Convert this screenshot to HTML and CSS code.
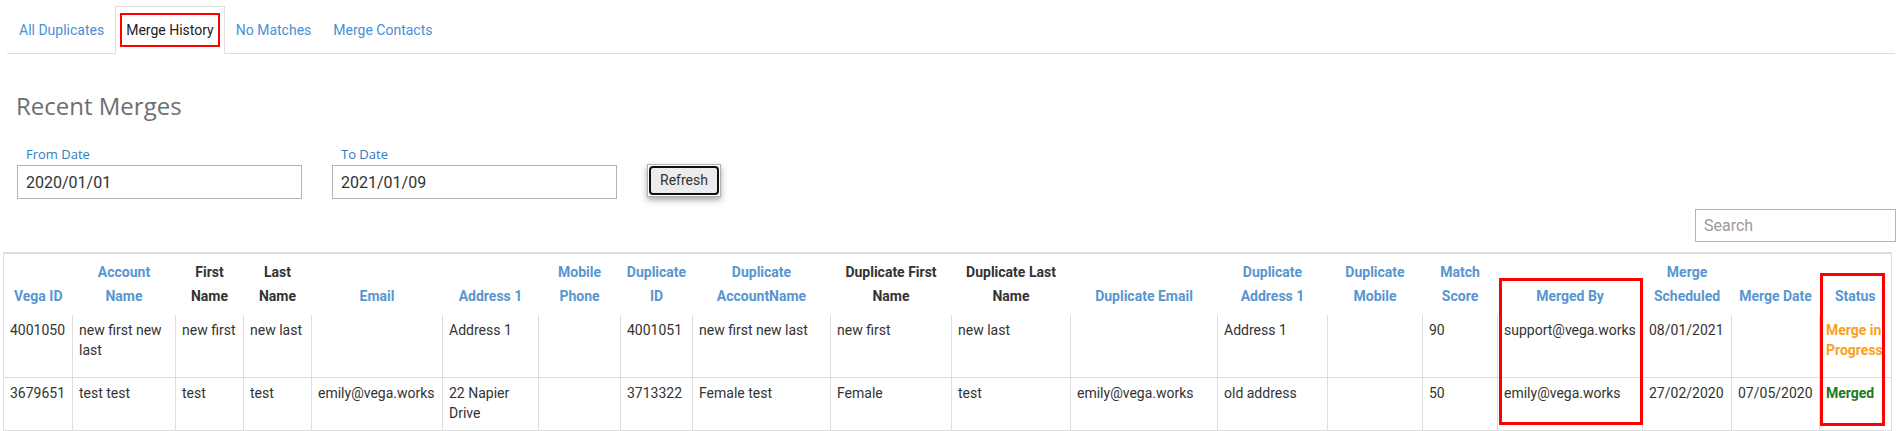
FILE: index.html
```html
<!DOCTYPE html>
<html lang="en">
<head>
  <meta charset="UTF-8">
  <meta name="viewport" content="width=device-width, initial-scale=1.0">
  <title>Merge History</title>
  <link rel="stylesheet" href="styles.css">
</head>
<body>

  <ul class="tabs">
    <li><a href="#"><span>All Duplicates</span></a></li>
    <li class="active"><a href="#"><span>Merge History</span></a></li>
    <li><a href="#"><span>No Matches</span></a></li>
    <li><a href="#"><span>Merge Contacts</span></a></li>
  </ul>

  <div class="content">
    <h2 class="title">Recent Merges</h2>

    <div class="filters">
      <div class="field">
        <label for="from-date">From Date</label>
        <input type="text" id="from-date" class="input" value="2020/01/01">
      </div>
      <div class="field">
        <label for="to-date">To Date</label>
        <input type="text" id="to-date" class="input" value="2021/01/09">
      </div>
      <button class="refresh"><span>Refresh</span></button>
    </div>
  </div>

  <div class="search-row">
    <input type="text" class="search" placeholder="Search">
  </div>

  <div class="grid-wrap">
    <table class="grid">
      <colgroup>
        <col class="w69"><col class="w103"><col class="w68"><col class="w68"><col class="w131">
        <col class="w96"><col class="w82"><col class="w72"><col class="w138"><col class="w121">
        <col class="w119"><col class="w147"><col class="w110"><col class="w95"><col class="w75">
        <col class="w145"><col class="w89"><col class="w88"><col class="w72">
      </colgroup>
      <thead>
        <tr>
          <th>Vega ID</th>
          <th>Account Name</th>
          <th class="plain">First Name</th>
          <th class="plain">Last Name</th>
          <th>Email</th>
          <th>Address 1</th>
          <th>Mobile Phone</th>
          <th>Duplicate ID</th>
          <th>Duplicate AccountName</th>
          <th class="plain">Duplicate First Name</th>
          <th class="plain">Duplicate Last Name</th>
          <th>Duplicate Email</th>
          <th>Duplicate Address 1</th>
          <th>Duplicate Mobile</th>
          <th>Match Score</th>
          <th>Merged By</th>
          <th>Merge Scheduled</th>
          <th>Merge Date</th>
          <th>Status</th>
        </tr>
      </thead>
      <tbody>
        <tr class="first">
          <td>4001050</td>
          <td>new first new last</td>
          <td>new first</td>
          <td>new last</td>
          <td></td>
          <td>Address 1</td>
          <td></td>
          <td>4001051</td>
          <td>new first new last</td>
          <td>new first</td>
          <td>new last</td>
          <td></td>
          <td>Address 1</td>
          <td></td>
          <td>90</td>
          <td>support@vega.works</td>
          <td>08/01/2021</td>
          <td></td>
          <td class="status pending">Merge in Progress</td>
        </tr>
        <tr>
          <td>3679651</td>
          <td>test test</td>
          <td>test</td>
          <td>test</td>
          <td>emily@vega.works</td>
          <td>22 Napier Drive</td>
          <td></td>
          <td>3713322</td>
          <td>Female test</td>
          <td>Female</td>
          <td>test</td>
          <td>emily@vega.works</td>
          <td>old address</td>
          <td></td>
          <td>50</td>
          <td>emily@vega.works</td>
          <td>27/02/2020</td>
          <td>07/05/2020</td>
          <td class="status merged">Merged</td>
        </tr>
      </tbody>
    </table>

    <div class="mark mark-by"></div>
    <div class="mark mark-status"></div>
  </div>

</body>
</html>
```

FILE: styles.css
```css
body {
  margin: 0;
  font-family: Roboto, "Liberation Sans", sans-serif;
  color: #333;
  background-color: #fff;
}

/* tabs */
.tabs {
  display: flex;
  list-style: none;
  margin: 6px 7px 0 7px;
  padding: 0 0 0 1px;
  border-bottom: 1px solid #ddd;
}

.tabs a {
  display: block;
  margin-bottom: -1px;
  padding: 6px 4px;
  border: 1px solid transparent;
  font-size: 14px;
  line-height: 20px;
  color: #4a8fd6;
  text-decoration: none;
}

.tabs a span {
  display: block;
  padding: 5px 4px;
  border: 2px solid transparent;
}

.tabs .active a {
  border-color: #ddd;
  border-bottom-color: #fff;
  color: #222;
}

.tabs .active a span {
  border-color: #f00;
}

/* filters */
.content {
  padding-left: 17px;
}

.title {
  margin: 36px 0 0 -1px;
  font-family: "Open Sans", sans-serif;
  font-weight: 400;
  font-size: 24px;
  line-height: 32px;
  color: #6f6f6f;
}

.filters {
  display: flex;
  align-items: flex-start;
  gap: 30px;
  margin-top: 23px;
}

.field label {
  display: block;
  margin-bottom: 2px;
  padding-left: 9px;
  font-family: "Open Sans", sans-serif;
  font-size: 13px;
  line-height: 18px;
  color: #2f7bc4;
}

.input {
  box-sizing: border-box;
  width: 285px;
  height: 34px;
  padding: 0 8px;
  border: 1px solid #b4b4b4;
  font-family: Roboto, sans-serif;
  font-size: 16px;
  color: #333;
  outline: none;
}

.refresh {
  margin-top: 19px;
  padding: 1px;
  border: 1px solid #b1b1b1;
  background-color: #fff;
  box-shadow: 0 3px 6px rgba(0, 0, 0, 0.35);
  font-family: Roboto, sans-serif;
  font-size: 14px;
  color: #333;
  cursor: pointer;
}

.refresh span {
  display: block;
  padding: 2px 9px;
  border: 2px solid #111;
  border-radius: 4px;
  background-color: #ececec;
  line-height: 21px;
}

.search-row {
  display: flex;
  justify-content: flex-end;
  margin-top: 10px;
  padding-right: 6px;
}

.search {
  box-sizing: border-box;
  width: 201px;
  height: 33px;
  padding: 0 8px;
  border: 1px solid #b4b4b4;
  font-family: Roboto, sans-serif;
  font-size: 16px;
  color: #333;
  outline: none;
}

.search::placeholder {
  color: #9a9a9a;
}

/* table */
.grid-wrap {
  position: relative;
  width: 1888px;
  margin: 10px 0 0 3px;
}

.grid {
  width: 1888px;
  table-layout: fixed;
  border-collapse: collapse;
  border: 1px solid #ddd;
  border-top: 2px solid #ddd;
  border-bottom: 2px solid #ddd;
}

.w68 { width: 68px; }
.w69 { width: 69px; }
.w72 { width: 72px; }
.w75 { width: 75px; }
.w82 { width: 82px; }
.w88 { width: 88px; }
.w89 { width: 89px; }
.w95 { width: 95px; }
.w96 { width: 96px; }
.w103 { width: 103px; }
.w110 { width: 110px; }
.w119 { width: 119px; }
.w121 { width: 121px; }
.w131 { width: 131px; }
.w138 { width: 138px; }
.w145 { width: 145px; }
.w147 { width: 147px; }

.grid th {
  padding: 6px 6px 7px;
  font-size: 14px;
  font-weight: 700;
  line-height: 24px;
  text-align: center;
  vertical-align: bottom;
  color: #5896d0;
}

.grid th.plain {
  color: #333;
}

.grid td {
  padding: 5px 6px 7px;
  border-left: 1px solid #ddd;
  border-top: 1px solid #ddd;
  font-size: 14px;
  line-height: 20px;
  vertical-align: top;
  text-align: left;
}

.grid tr.first td {
  border-top: none;
  padding-bottom: 17px;
}

.status {
  font-weight: 700;
}

.pending {
  color: #f6a21e;
}

.merged {
  color: #1b7d1b;
}

/* highlight boxes drawn over the table */
.mark {
  position: absolute;
  box-sizing: border-box;
  border: 3px solid #f00;
  pointer-events: none;
}

.mark-by {
  left: 1496px;
  top: 26px;
  width: 144px;
  height: 147px;
}

.mark-status {
  left: 1817px;
  top: 21px;
  width: 65px;
  height: 153px;
}
```
